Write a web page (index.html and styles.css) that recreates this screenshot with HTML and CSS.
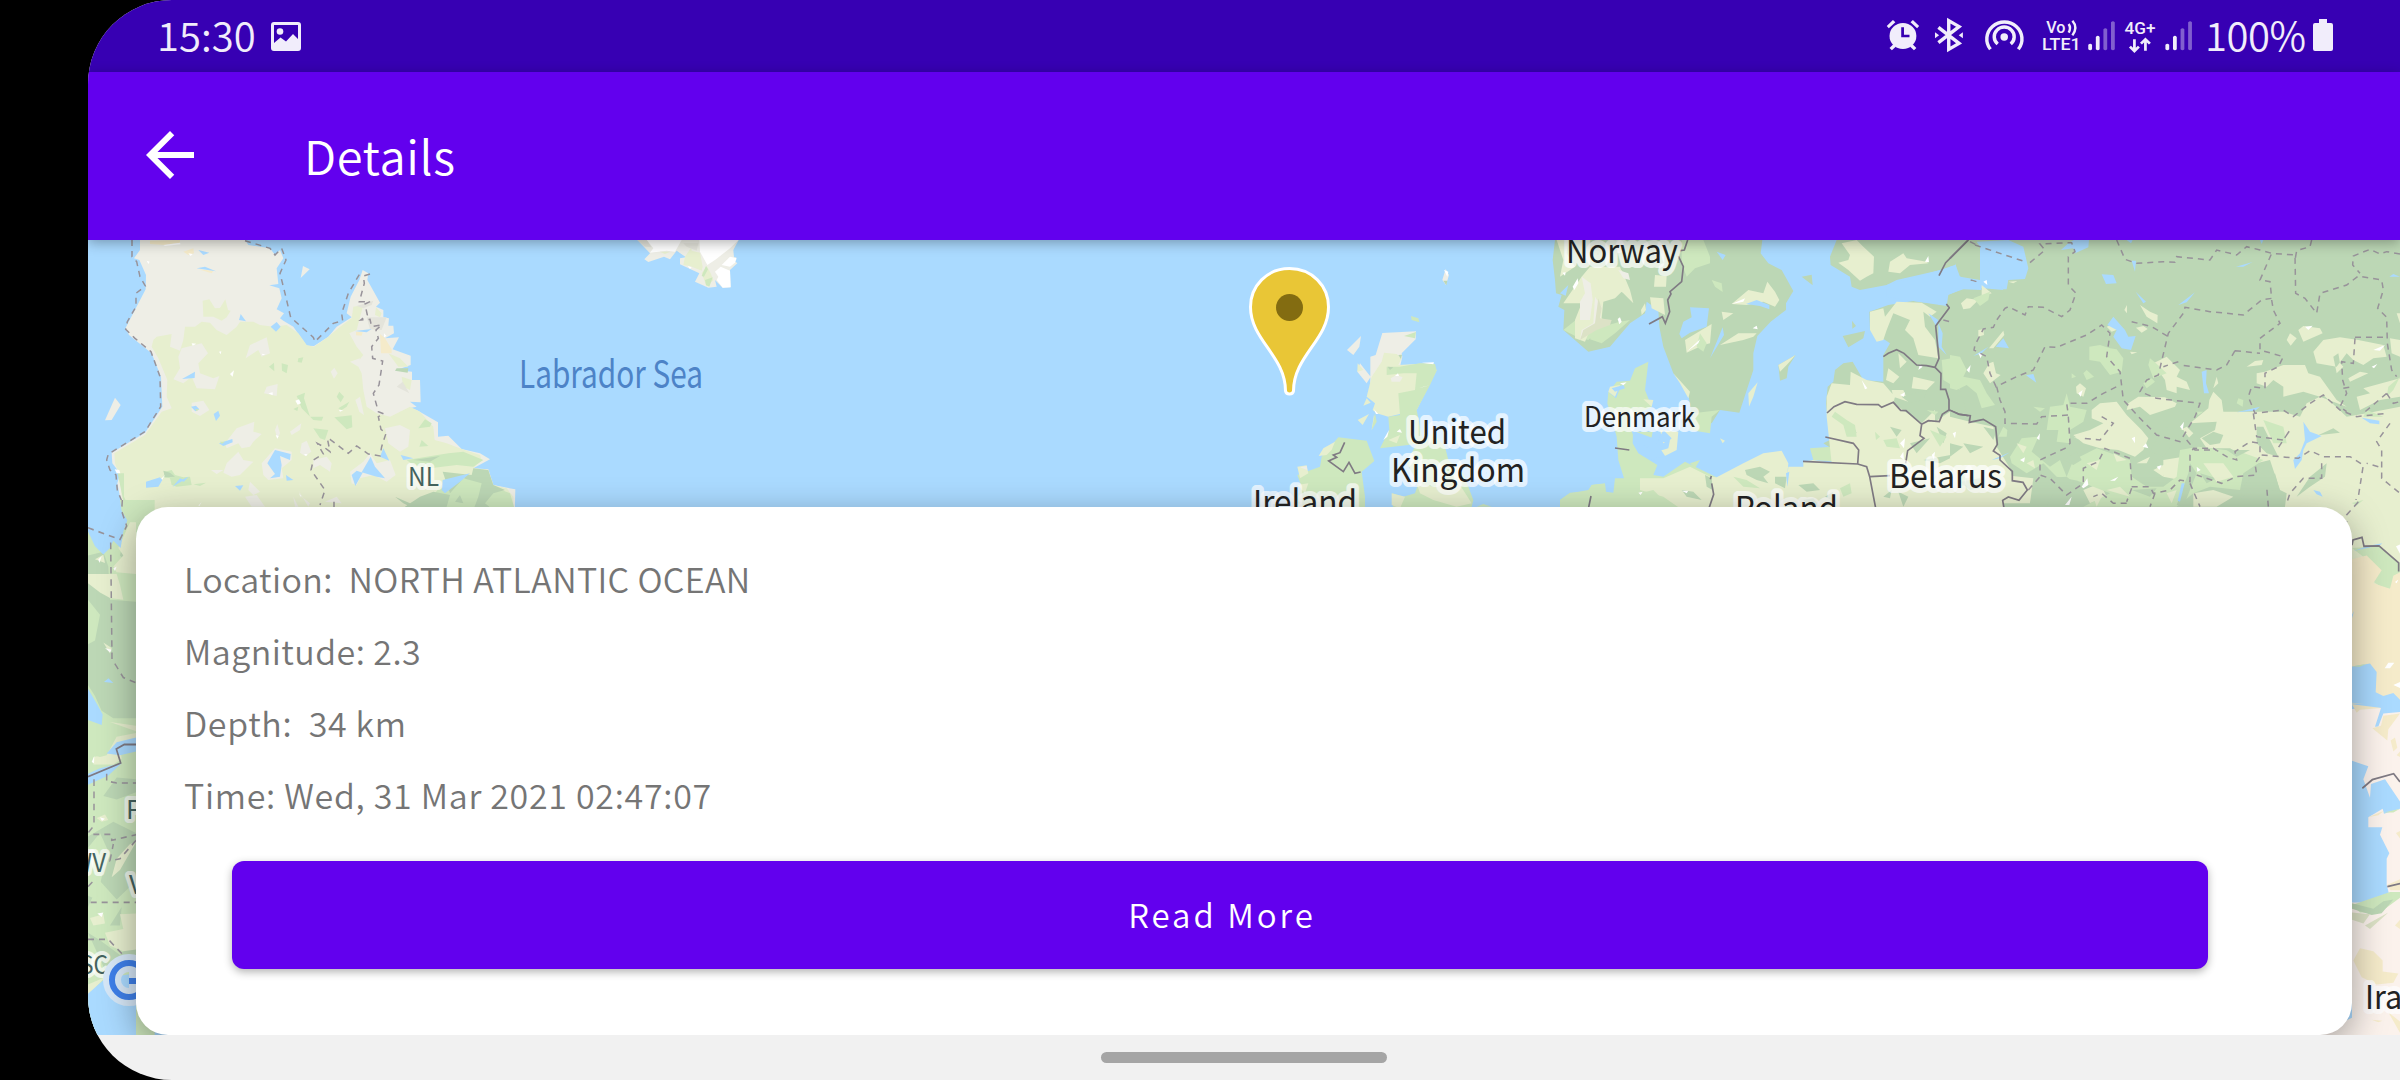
FILE: index.html
```html
<!DOCTYPE html>
<html lang="en">
<head>
<meta charset="utf-8">
<title>Details</title>
<link rel="stylesheet" href="styles.css">
</head>
<body>
<main class="screen">
  <header class="status">
    <span class="clock">15:30</span>
    <svg class="picture" viewBox="0 0 30 29"><path fill-rule="evenodd" d="M3 0H27Q30 0 30 3V26Q30 29 27 29H3Q0 29 0 26V3Q0 0 3 0ZM3 3V21L9.500 15.500 15 19.500 22 12 27 17V3Z"/><circle cx="9" cy="9.500" r="3.300"/></svg>
    <svg class="signals" viewBox="70 0 900 216" preserveAspectRatio="none">
      <g class="ink">
        <circle cx="125" cy="108" r="39"/>
        <path d="M78 78L96 60L103 67L84 85ZM172 78L154 60L147 67L166 85ZM86 144L97 133L104 140L93 151ZM164 144L153 133L146 140L157 151Z"/>
        <path class="cut" d="M124 82V108H144" fill="none"/>
        <path class="line" d="M228 82L288 130L258 148V62L288 80L228 128"/>
        <path d="M218 97L230 106L218 115ZM299 97L287 106L299 115Z"/>
        <circle cx="419" cy="111" r="11"/>
        <path class="line" d="M400 132A29 29 0 1 1 438 132M379 148A51 51 0 1 1 460 148"/>
        <path class="wave" d="M606 72Q614 84 606 98M617 62Q634 82 617 106"/>
        <path d="M663 134Q669 128 674 134V148Q669 154 663 148ZM685 111Q691 104 696 111V148Q691 154 685 148Z"/>
        <path class="dim" d="M707 88Q713 81 718 88V148Q713 154 707 148ZM729 67Q735 60 740 67V148Q735 154 729 148Z"/>
        <path d="M887 134Q893 128 898 134V148Q893 154 887 148ZM909 111Q915 104 920 111V148Q915 154 909 148Z"/>
        <path class="dim" d="M931 88Q937 81 942 88V148Q937 154 931 148ZM953 67Q959 60 964 67V148Q959 154 953 148Z"/>
        <path class="updown" d="M797 118V153M784 140L797 153L810 140M829 152V119M816 131L829 118L842 131"/>
      </g>
      <text class="net" x="541" y="98" textLength="56" lengthAdjust="spacingAndGlyphs">Vo</text>
      <text class="net" x="529" y="151" textLength="112" lengthAdjust="spacingAndGlyphs">LTE1</text>
      <text class="net" x="768" y="101" textLength="90" lengthAdjust="spacingAndGlyphs">4G+</text>
    </svg>
    <span class="charge">100%</span>
    <svg class="battery" viewBox="0 0 20 32"><path d="M6 0H14V4H18Q20 4 20 6V30Q20 32 18 32H2Q0 32 0 30V6Q0 4 2 4H6Z"/></svg>
  </header>

  <div class="toolbar">
    <svg class="back" viewBox="0 0 24 24"><path d="M20 11H7.830l5.590-5.590L12 4l-8 8 8 8 1.410-1.410L7.830 13H20v-2z"/></svg>
    <h1>Details</h1>
  </div>

  <section class="map">
    <svg class="tiles" viewBox="88 240 2312 795">
      <rect class="sea" x="88" y="240" width="2312" height="795"/>

      <!-- Quebec and Labrador -->
      <g transform="translate(80 230) scale(.33333)">
        <path class="bare" d="M180 30V60L162 85 178 90 198 135 197 178 137 293 147 315 215 370 243 440 247 530 195 608 95 668 97 700 120 730 112 760 122 810 130 840 145 900H1303L1306 778 1240 765 1225 718 1180 715 1230 688 1200 670 1145 657 1105 617 1074 620V577L1010 540 988 535 1010 530 990 515 1022 517 1020 450H996V425L950 420 992 405V377L938 358 957 322 915 325 942 310 940 287H925L927 265 910 262V240L888 230 900 218 862 150 865 130 848 120 838 150 812 200 800 250 815 262 770 290 745 320 702 348 680 347 640 290 610 272 600 265 612 250 590 238 605 205 598 175 568 166 595 162 590 115 610 85 600 60 585 75 570 55 505 45 495 30ZM669 108L689 118 662 144ZM105 503L122 525 95 570 75 571ZM24 820L30 825V848H24Z"/>
        <path class="grass" d="M230 320L275 312 270 350 300 362 310 330 315 290 345 290 365 275 390 278 410 300 440 315 470 290 480 275 520 275 540 285 580 290 620 285 655 310 680 345 702 350 745 320 780 290 815 265 820 230 850 225 830 300 808 310 830 350 850 375 830 400 845 430 850 480 860 530 890 550 930 560 960 545 990 530 1020 545 1060 590 1064 630 1100 640 1145 657 1200 675 1205 690 1180 715 1225 720 1240 765 1280 775 1300 800V900H145L125 800 120 740 105 700 103 670 195 615 245 545 275 535 260 500 262 450 235 385 215 350 220 330ZM368 212L388 208 405 235 420 234 436 208 444 240 452 242 440 262 425 272 400 260 370 260ZM888 232L905 250 900 262 885 255ZM925 370L960 385 985 410 955 410ZM965 440L995 450 990 480 970 470Z"/>
        <path class="bare" d="M305 355L365 340 384 370 355 400 360 430 400 445 418 438 405 478 350 475 335 440 310 460 280 448 300 415 295 380ZM510 345L560 322 570 370 545 380 535 360 497 385ZM560 470L593 462 590 498 552 490ZM335 518L370 512 388 540 360 558 335 545ZM752 425L763 413 773 430 762 446ZM826 510L840 500 852 555 838 545ZM915 595L960 585 990 600 985 650 960 665 925 640ZM435 640L470 595 523 575 520 605 545 612 520 635 510 650 485 655 475 640 440 655ZM585 600L592 582 600 610 592 627ZM630 605L664 580 660 600 635 615ZM665 640L680 632 694 665 675 678 660 668ZM440 700L475 665 490 690 520 695 480 735 455 740 430 728ZM393 720L430 720 410 732ZM545 700L585 655 635 665V690L605 715 610 745 565 750 550 735ZM700 690L740 680 755 700 750 725 720 705 700 715ZM810 725L850 695 870 670 890 700 930 690 947 735 920 755 880 735 840 745 830 765 815 760ZM510 755L540 785 520 795 505 780ZM495 800L530 795 555 830H515ZM655 780L665 800 690 820 685 830ZM735 815L770 800 785 820ZM810 395L840 385 835 410ZM640 800L655 830H645Z"/>
        <path class="mid" d="M567 410L582 398 583 424ZM605 400L624 405 620 430 606 422ZM655 385L670 382 665 398 653 396ZM650 498L675 488 672 505 690 560 730 560 725 572 700 570 665 535ZM778 485L792 500 782 517 770 500ZM775 535L808 515 800 530 785 540ZM763 562L815 556 817 592 800 598ZM700 595L745 600 735 630 720 625ZM1015 595L1035 568 1055 580 1050 590ZM1018 650L1025 630 1045 648ZM980 690L1105 670 1150 665 1210 690 1180 710 1130 705 1050 715 1000 705ZM990 820L1060 795 1090 760 1180 740 1240 770 1290 790 1302 830V900H990ZM255 725L275 720 285 735 310 742 330 740 335 765 290 770 275 765 270 745 250 742ZM113 730L132 730V800L150 840 180 860 165 900H148ZM340 763L378 758 360 768Z"/>
        <path class="forest" d="M950 415L985 415 983 428 945 422ZM1000 690L1080 678 1050 695ZM1088 725L1175 735 1180 715 1225 720 1240 765 1275 780 1240 790 1215 820 1240 840H1180L1195 800 1205 760 1150 745 1110 790ZM975 830L1020 800 1060 785 1110 795 1100 830 1075 860H970ZM1125 815L1140 795 1150 820ZM250 722L270 728 285 740 255 742ZM945 800L990 820 1000 835 970 820ZM120 830L145 850 150 880Z"/>
        <path class="sand" d="M210 32L300 30V38L255 45 210 42ZM310 65L340 55 342 70 325 75ZM355 118L400 122 395 130ZM828 305L848 307 845 317 828 316ZM900 312L915 325 935 358V370L903 370Z"/>
        <path class="rock" d="M830 228L880 212 875 225 850 235ZM860 262L920 262 905 300 870 298ZM950 470L968 455 988 490Z"/>
        <path class="snow" d="M250 45L300 38 302 43 255 48ZM325 70L338 72 332 78ZM200 92L209 95 205 102ZM335 340L349 341 338 347ZM450 432L462 421 458 440ZM646 512L657 508 663 520 653 524ZM545 371L557 373 548 376ZM417 365L424 364 422 373ZM565 490L578 487V496ZM777 540L790 541 780 545ZM240 750L255 735 243 755ZM104 718L118 720 121 730 110 730ZM355 828L365 815 358 828ZM658 788L664 800 660 798ZM912 310L920 318 912 322ZM587 615L596 618 592 626ZM672 672L683 673 678 679Z"/>
        <path class="sea" d="M355 60L388 68 370 75ZM350 115L375 110 408 124ZM477 270L482 252 498 274ZM572 290L590 276 602 290 588 305ZM306 447L345 425 344 444ZM333 530L348 527 358 538 346 544ZM401 552L415 542 420 557 408 573ZM417 640L457 627 458 637 430 648ZM562 700L585 660 632 672 630 690 600 678 605 705 600 740 570 745 585 732ZM618 735L640 750 620 752ZM198 755L240 742 247 750 235 770 198 773ZM278 770L300 745 312 750ZM300 752L325 740 312 755ZM465 768L490 766 480 782ZM815 735L830 722 848 728 826 768ZM845 727L872 680 885 710 915 745 890 740ZM900 680L910 655 928 692ZM962 675L1000 685 970 690ZM1088 750L1170 730 1140 755 1095 790 1085 780ZM825 303L875 297 860 307Z"/>
        <path class="mid" d="M640 537L655 530 652 543ZM420 635L435 635 425 642ZM345 538L358 537 350 544Z"/>
        <path class="dash" d="M156 30V80L170 95 180 140 196 168 168 190V230L142 275 137 298 165 325 213 365 240 440 242 530 195 605 85 672 80 690 90 720 108 735 112 780 126 815 130 850 145 870M495 32L570 55 585 75 605 55 618 90 600 130 615 190 632 262 700 322 705 335 760 280 788 272 785 250 805 190 840 130M870 132L850 138 853 160 838 215 870 215 855 222 862 255 842 270 870 268 875 290 905 285 888 300 895 325 875 350 878 385 908 393 897 465 880 490 895 545 912 552 895 560 903 598 918 610 905 650 900 678 865 672 830 648 805 670 750 628 742 625 750 665 730 650 712 640 730 672 700 690 693 720 735 780 720 825M762 815V835"/>
      </g>

      <!-- Greenland tip -->
      <g transform="translate(500 230) scale(.33333)">
        <path class="bare" d="M412 30L450 70 433 88 445 96 492 80 510 88 530 62 558 82 540 85V103L598 130 585 155 625 173 650 170 645 150 668 173 692 172 690 120 712 100 700 90 710 82H702L700 60 716 30Z"/>
        <path class="snow" d="M440 30L460 55 450 68 500 62 525 65 545 30ZM598 30L600 65 622 105 645 90 690 55 716 30ZM665 105L690 80 710 85 705 98 690 110ZM645 125L662 110 690 122 692 172 668 173 650 150 655 140Z"/>
        <path class="grass" d="M480 65L510 65 495 72ZM555 80L572 55 572 40 575 62 600 68 608 110 605 122 570 108 550 105ZM605 130L620 108 632 130 640 150 620 170Z"/>
        <path class="mid" d="M605 138L618 108 624 118 612 140ZM615 150L638 142 628 170 618 165Z"/>
        <path class="rock" d="M412 30H440L455 52 435 50ZM550 40H595L590 62 560 50Z"/>
        <path class="snow" d="M563 108L575 112 570 117Z"/>
      </g>

      <!-- British Isles -->
      <g transform="translate(1200 230) scale(.33333)">
        <path class="bare" d="M737 117L747 135 738 165 727 150ZM441 360L483 318 478 350 460 375ZM480 400L512 440 500 460 472 425ZM547 309L648 304 647 328 605 370 607 380 600 410 700 398 511 480V380L527 375Z"/>
        <path class="grass" d="M552 368L590 372 605 385 595 405 690 400 710 420 650 540 565 560 530 550 518 540 525 520 500 500 515 440 545 395ZM473 400L490 420 472 425ZM500 505L512 518 490 527ZM473 570L507 552 488 585ZM515 600L522 555 528 570Z"/>
        <path class="mid" d="M633 258L655 265 658 277 635 270ZM612 318L648 306 645 325ZM598 410L660 400 705 402 710 422 690 465 650 540 670 640 540 655 568 600 565 560 600 555 595 490 645 480 650 430 610 430 560 435 560 410ZM415 622L500 632 523 693 485 725 495 800 495 850H270L305 770 292 735 360 710 365 680ZM650 640L700 610 735 650 745 690 790 730 805 770 820 810 810 850H580L577 790 610 800 645 790 655 760 620 700ZM515 600L525 550 530 575ZM830 830L850 822 875 830ZM1080 850V810L1110 788 1165 785 1175 765 1200 762V850Z"/>
        <path class="grass" d="M356 678L370 655 405 635 395 660 380 675ZM292 710L320 706 325 730 300 745ZM292 765L325 760 315 790ZM565 630L600 615 590 640ZM575 790L615 800 600 835 575 825ZM650 760L700 770 780 765 815 820 770 830 700 810 660 790Z"/>
        <path class="bare" d="M572 445L590 435 608 442 600 455 575 455ZM300 712L320 708 322 720Z"/>
        <path class="snow" d="M665 398L702 397 700 403ZM585 438L594 430 597 438ZM522 538L535 552 528 552ZM550 630L567 600 562 620ZM590 605L600 597 606 608ZM655 475L690 466 670 470ZM732 120L745 125 742 140Z"/>
        <path class="forest" d="M595 375L606 374 603 387ZM563 410L580 412 570 420ZM730 152L742 152 739 166Z"/>
        <path class="border" d="M434 637L420 668 400 675 410 682 386 693 430 725 447 697 465 730 482 726M1172 798L1167 840"/>
      </g>

      <!-- Scandinavia and the Baltic -->
      <g transform="translate(1530 230) scale(.33333)">
        <path class="forest" d="M75 30L68 90 75 150 78 190 95 195 85 230 103 240 100 300 175 365 240 350 300 280 345 250 350 215 385 240 388 290 400 350 430 430 475 490 485 560 545 580 570 540 628 548 670 420V370L682 318 722 275 768 240V220L790 183 755 120 715 100 692 70 697 30ZM815 140L845 134 848 166ZM920 30L900 80 902 105 960 140 965 170 990 180 1070 165 1100 150 1275 110 1275 100 1290 140 1350 150V870H1240L880 640 900 630 888 520 893 470 910 455 915 420 940 400 968 395 1000 450 1060 455V375L1080 340 1020 300 1018 245 1075 225 1150 213 1250 228 1255 195 1300 175 1350 170V30ZM938 318L1005 303 1000 325 955 352ZM966 272L978 288 967 296ZM745 405L797 375 775 410 770 445 750 452Z"/>
        <path class="sea" d="M1070 165L1230 120 1275 105 1280 140 1350 152V172L1300 175 1250 195 1245 225 1150 213 1070 200Z"/>
        <path class="mid" d="M355 395L345 480 365 530 310 560 308 640 325 670 382 705 370 735 400 740 465 695 515 720 560 742 545 870H90V810L120 790 175 780 185 765 225 760 228 785 250 788 255 745 282 745 265 690 260 620 232 520 235 485 258 505 270 475 245 475 260 455 300 452 315 415ZM305 605H368L360 645 330 635ZM480 600L490 550 570 540 545 560 540 610ZM100 300L175 240 195 310 175 330 140 320ZM840 655L905 650 900 600 985 640V700L850 690ZM190 300L235 285 270 275 300 270 255 310 215 340 180 328ZM455 30H520L540 80V100L495 115 470 140 455 100ZM545 150L575 160 578 186 555 170Z"/>
        <path class="grass" d="M390 600L445 605 440 660 400 680 380 665 415 655 420 630 400 640ZM560 742L640 700 700 670 755 662 775 700 770 760 775 710 820 710 820 695 850 690 905 700 890 560 890 500 905 460 960 465 962 425 1010 450 1060 460 1095 500 1090 520 1175 580 1215 540 1215 575 1260 545 1290 610 1350 610V870H500L400 800 330 780 330 745 400 745 480 710 540 740ZM400 605H440L430 620ZM655 490L683 457 670 500 657 530ZM745 405L797 375 770 405 750 425ZM80 30H115L110 70 135 110 90 140 100 90ZM100 220L155 140 180 110 270 110 290 170 255 205 220 215 215 265 235 280 180 300 165 335 135 325 135 270 155 220ZM255 130L275 120 300 180 310 220 280 190 250 165ZM375 135L410 138 408 170 372 170ZM360 202L400 205 405 255 365 235ZM333 240L345 220 348 240 335 255ZM605 222L655 180 700 190 712 155 735 185 748 210 735 230 700 215 650 225ZM575 245L610 250 580 270ZM570 345L625 310 680 310 670 320 640 330ZM465 330L545 282 540 340 520 345 470 368ZM430 430L480 485 475 505 450 460ZM925 98L955 90 960 75 935 40 980 30 1000 50 1032 80 1030 130 1010 140 990 152 955 120ZM1075 125L1080 95 1120 70 1130 85 1190 95 1195 100 1140 105 1110 130ZM1020 245L1060 235 1065 260 1100 215 1175 218 1220 245 1200 260 1180 245 1185 290 1215 330 1225 385 1165 375 1150 325 1125 300 1140 270 1090 250 1070 300 1060 330 1040 335 1020 300ZM1105 370L1130 395 1110 415ZM1075 415L1108 440 1090 460 1068 450ZM1150 440L1215 455 1190 480 1145 475ZM1085 480L1120 480 1135 515 1090 500ZM1290 215L1350 205 1335 240 1300 235ZM235 485L240 470 270 465 255 500ZM570 625L585 632 578 640ZM340 508L370 510 365 530Z"/>
        <path class="bare" d="M155 140L182 160 188 210 180 270 150 270 150 215 165 190ZM195 200L215 230 210 280 150 330 155 300 190 280ZM265 120L295 130 300 150 280 145Z"/>
        <path class="dune" d="M205 205L215 235 210 265 245 270 240 285 200 300 150 330 160 300 195 280Z"/>
        <path class="forest" d="M645 720L690 710 720 725 700 740 715 760 680 750 650 735ZM735 740L770 740 765 775 735 760ZM525 735L545 745 548 780 530 770ZM455 780L490 785 515 810 470 800ZM805 765L850 760 870 780 830 785ZM1115 500L1190 480 1180 510 1140 520ZM950 590L970 585 980 610 960 600ZM1080 590L1115 600 1100 620ZM1140 640L1200 625 1160 670ZM1220 590L1250 610 1240 640ZM1060 800L1085 780 1080 805ZM1105 785L1135 800 1120 830ZM885 800L910 785 905 810ZM1180 690L1290 670 1230 700ZM1260 545L1350 570 1350 620 1290 600ZM820 810L850 805 870 830H840ZM1300 655L1350 640V690L1310 700Z"/>
        <path class="mid" d="M915 545L950 570 975 585 980 620 950 620 940 585 905 560ZM1235 390L1290 380 1350 400V470L1290 480 1240 450ZM1035 605L1050 620 1038 630ZM930 775L960 760 965 790 940 800ZM1060 630L1100 625 1110 655 1070 650ZM330 790L370 780 390 800 350 815ZM1190 540L1225 545 1215 555ZM510 310L530 340 520 365 500 350ZM480 700L510 690 495 715ZM1200 600L1250 620 1230 650ZM610 740L650 750 690 775 640 770Z"/>
        <path class="sea" d="M560 65L587 75 578 90ZM480 232L537 235 530 290 480 308 455 325 448 312 460 275 485 262ZM578 292L582 315 540 385ZM648 222L680 210 718 225V238L690 228ZM245 475L280 465 285 475 255 485ZM303 600L320 640 355 650 330 670 370 690 380 680 410 685 370 625ZM1225 280L1238 310 1235 350 1250 375 1225 350ZM1195 250L1225 270 1220 290ZM768 730L778 725 772 770ZM90 190L115 165 107 197ZM400 600L425 625 410 640 385 630Z"/>
        <path class="snow" d="M128 170L143 145 145 160 133 180ZM97 128L107 127 105 137ZM263 267L270 262 275 275 268 283ZM605 222L645 205 640 215ZM668 295L680 287 683 298ZM470 365L510 328 505 340ZM270 460L290 457 280 466ZM1185 95L1195 78 1197 97ZM1170 403L1178 410 1165 420ZM1110 495L1125 487 1122 500ZM995 450L1012 475 1005 478ZM1110 640L1125 625 1122 655ZM1110 680L1120 665 1122 690ZM1290 645L1302 640V657ZM1205 675L1215 665 1212 690ZM325 788L338 785 332 795ZM455 782L475 782 470 790ZM1190 728L1205 735 1200 742Z"/>
        <path class="border" d="M473 30L463 60 450 62M445 78L460 110 455 155 420 185 423 192 413 210 419 245 406 280 397 260 357 282M1315 30L1247 98 1227 137M1249 222L1258 233 1217 288 1227 385 1215 412 1233 430 1232 478H1247L1257 510V540L1285 552 1320 558 1318 577 1350 568M1060 380L1075 370 1100 359 1122 370 1160 405 1190 407 1215 412M891 549L912 530 945 515 980 523 1045 524 1055 532 1090 517 1112 541 1128 542 1175 583 1195 572 1228 575 1237 553 1257 540M1175 583L1170 617 1182 625 1133 662 1127 700M886 621L970 640 986 660 983 702M819 694L983 702 1010 710 1019 740 1040 850M1019 740L1080 737M544 738L541 748M545 760L551 793 538 832M183 798L176 832M255 654L298 660"/>
        <path class="dash" d="M1240 270L1295 285 1325 315M1340 320L1332 360M1322 150L1350 158M1320 35L1350 50"/>
      </g>

      <!-- Western Russia -->
      <g transform="translate(1950 230) scale(.33333)">
        <path class="forest" d="M70 30H1350V870H0V540L60 575 0 390V195L60 170 100 175 160 180 100 60Z"/>
        <path class="grass" d="M0 560L60 575 130 590 140 650 180 715 190 755 230 780 200 810 160 810V870H0ZM110 730L250 745 240 820H160ZM1350 530L1250 550 1190 560 1120 495 1070 520 1050 560 1000 545 920 545 820 545 815 510 790 485 778 510 775 535 720 580 800 575 795 600 750 625 770 655 840 655 920 700 960 690 990 780 1010 790 1000 870H1350ZM920 430L945 425 1000 405 1065 405 1075 430 1110 440 1160 510 1190 530 1110 500 1060 485 1000 500 1000 470 970 450 950 470 920 460ZM890 410L915 393 940 390 935 405ZM1090 365L1120 330 1170 322 1225 330 1300 345 1310 380 1270 385 1240 405 1210 390 1190 370 1160 410 1100 400ZM1170 400L1165 370 1150 380 1160 430 1180 410ZM1045 300L1060 288 1110 295 1118 310 1060 335ZM1010 330L1020 310 1040 325 1022 347ZM1340 250H1350V280ZM1320 325L1350 330V380L1325 370ZM1195 445L1230 425 1255 430 1200 455ZM1240 475L1350 445V500L1290 510 1230 540 1220 500 1260 490ZM33 220L50 205 85 210 60 235 40 238ZM95 165L125 190 95 200ZM175 155L202 153 190 160ZM570 225L600 245 623 255 622 280 590 260ZM523 240L531 225V250ZM558 293L580 288 593 297 575 308ZM117 355L160 302 163 315 130 355ZM470 290L490 283 505 298 485 305ZM85 300L100 298 102 315 85 320ZM100 430L118 400 130 395 138 430 152 435 120 460ZM565 500L645 502 680 520 675 530 600 555 570 530 530 540 535 520ZM610 400L650 380 690 420 680 440 710 455 720 480 680 470 680 490 650 480 645 450ZM378 470L390 460 408 475 400 500 380 490ZM450 520L500 515 530 555 575 600 595 625 580 660 555 680 505 660 450 655 400 640 370 615 420 600 460 580 425 565 425 540ZM755 625L790 605 820 615 810 640 780 645ZM790 475L800 440 805 460ZM540 365L562 367 545 373ZM690 600L710 590 730 610 710 630ZM370 620L440 640 400 635ZM640 690L700 680 730 720 690 750 640 740ZM400 780L450 760 470 800 420 820ZM780 690L870 700 870 750 820 760 780 740Z"/>
        <path class="mid" d="M70 205L120 185 115 210 90 228ZM418 350L450 345 480 355 500 358 520 385 515 425 480 435 450 395 418 390ZM0 375L30 380 50 420 40 440 90 450 110 490 135 525 95 535 80 490 50 465 20 480 0 475ZM300 530L340 525 350 490 360 530 410 540 400 575 360 600V640L320 635 325 600 290 600ZM595 405L600 385 618 400 650 430 610 445ZM580 460L605 445 615 455 590 475ZM400 430L410 420 432 440 410 450ZM860 520L865 505 880 510 878 530ZM145 620L160 590 172 600 170 620ZM180 680L215 625 265 620 245 665 300 710 330 690 350 740 430 720 400 755 320 740 280 700 230 730 185 700ZM370 690L440 655 540 690 545 740 590 770 640 770 680 740 690 660 745 650 870 665 940 690 880 730 870 780 780 770 730 790 680 830H400L480 790 430 770 350 740ZM690 680L740 650 720 710ZM740 545L760 545 745 555ZM365 430L378 440 365 445ZM940 570L1000 590 1010 640 970 640ZM1250 540L1300 560 1240 560ZM1350 440L1330 480 1310 500 1315 470ZM0 715L40 735 60 760 30 770ZM250 530L285 535 270 545Z"/>
        <path class="forest" d="M640 590L700 600 730 640 670 640 640 680 600 665ZM920 590L940 590 985 680 950 670 920 640ZM880 770L920 720 950 740 910 770 870 810ZM1040 800L1080 740 1130 700 1125 740 1080 770ZM965 740L975 730 990 785 960 780ZM1085 625L1150 595 1170 608 1110 615ZM680 825L715 730 720 700 740 730 700 830ZM280 745L350 740 400 780 350 795ZM545 780L620 775 600 800ZM30 755L90 745 110 770 60 780ZM250 790L310 790 290 830 240 820ZM830 660L900 660 860 680ZM100 590L140 600 130 630ZM0 640L40 650 0 680ZM40 640L100 650 60 670ZM750 730L800 745 770 760ZM340 690L380 665 395 690 370 705Z"/>
        <path class="grass" d="M410 700L450 690 440 720ZM610 720L650 700 640 740ZM560 700L600 680 590 700ZM760 700L820 700 850 740 800 755ZM470 780L510 770 540 800ZM200 640L230 650 220 670ZM230 700L250 690 255 715ZM730 790L790 780 850 800 800 830H730ZM650 790L680 780 665 820ZM430 800L460 790 440 830ZM490 670L530 690 500 695Z"/>
        <path class="sea" d="M80 35L175 30 220 50 235 115 225 147 175 150 170 178 158 178 140 145 100 65ZM0 110L18 105 20 135 60 152 90 160 95 180 40 178 0 192ZM333 60L355 40 372 30H417L415 52 375 70 370 55ZM455 133L490 135 500 160 468 162ZM545 92L558 92 555 125ZM557 185L588 215 580 220ZM685 225L735 187 710 217ZM858 110L908 96 880 110ZM472 285L490 260 525 300 535 320 557 318 543 360 515 355 490 320 500 300ZM70 378L115 350 95 370ZM137 350L160 325 177 355ZM228 436L250 432 259 458ZM755 425L770 420 768 460 777 490 762 490ZM860 547L930 530 915 542ZM1235 563L1288 572V583L1260 580ZM1060 575L1080 605 1115 618 1070 640 1060 660 1055 690 1035 717 1030 690 1050 670 1065 630ZM695 760H704L690 815 683 812ZM1090 780L1110 785 1118 800 1100 793ZM1318 140L1330 132 1350 140ZM125 690L180 667 150 685ZM530 30H548L543 40ZM930 30H940L935 42Z"/>
        <path class="snow" d="M100 155L110 150 112 165ZM50 420L62 405 58 428ZM85 370L97 372 92 385ZM385 490L398 480 392 500ZM1065 290L1088 287 1075 300ZM1265 410L1282 402 1272 415ZM620 710L635 705 628 720ZM395 770L412 745 415 765 400 775ZM545 625L555 620V640ZM690 590L702 575 698 600ZM8 610L18 605 15 625ZM210 690L225 682 222 697ZM345 825L365 800 358 825ZM480 752L505 740 495 752ZM740 710L752 720 742 725ZM578 650L588 640 595 655ZM260 625L270 610 268 630ZM1270 360L1305 345 1290 362Z"/>
        <path class="border" d="M55 30L0 85M0 541L28 553 61 557 58 577 100 568 137 590 142 643 130 663 150 676V690L187 724V752L219 757 232 780 207 811 175 801 158 811 162 835"/>
        <path class="dash" d="M75 45L225 95M240 98L285 60 270 42 365 38 375 65 355 80V165L378 190 360 240 335 260 280 232 235 230 225 255 175 230 165 235 140 270 130 292 100 297 75 345 72 360 110 380 120 430 138 470 200 440 250 420 285 350 320 352 410 315 455 285 480 310 470 380 510 425 520 510 570 565 620 615 690 635 735 560 750 520 620 505 570 485 590 450 625 435 650 330 655 310 700 250 705 232 780 245 880 255 935 210 965 205 960 155 930 150 965 70M500 30L525 88 560 100 640 95 675 97 680 80 780 90 800 60 860 75 890 50 930 60 965 70 1035 75 1037 190 1065 205 1100 250 1110 190 1190 165 1225 138 1295 150 1300 180 1283 235 1310 262 1312 340 1325 420 1340 440M1085 30L1080 50 1040 62 1035 90M1350 72L1310 65 1290 72 1260 58 1210 78 1208 105 1230 130M965 210L970 240 990 280 930 325V360L1000 380 985 410 945 430V475L905 470 895 500 915 550 1000 540 1030 560 1080 520 1120 495 1170 540 1220 560 1310 550M1215 322H1312M1215 325L1210 400 1175 395 1178 450 1190 490 1170 530 1190 545M140 470L150 510 165 545V580L260 582 275 560 355 555 350 520 410 520 460 490 510 465M355 560L360 640 345 655 270 690V735L300 745 350 795 400 760V715L445 695 465 655 540 685 545 760M545 770H600L610 790 660 780 690 750 720 755V675L730 655 790 655 830 680 860 690 855 665 900 635 930 640V680L915 700 920 735 860 740 815 760 740 735M855 362L930 370M855 362L830 405 800 420 690 405M685 395L640 410M615 790L600 830M530 820H490L455 790 430 800M545 775L530 815M935 675L1045 685 1080 662 1120 680 1200 680 1240 705 1225 800 1190 850M910 550L920 620 1000 630 1020 600 980 660M1115 700L1115 745 1060 745 1020 790 1010 820M1320 580L1280 635 1295 660V745L1350 790M1310 490L1330 520 1350 515M455 560L490 580 450 630 400 625M710 630L735 660 800 660M955 830L950 770M235 780L270 740M720 760L750 830M545 275L605 290 655 320M1310 490L1240 550M1180 475L1210 470M1285 710L1250 700"/>
      </g>

      <!-- Eastern North America -->
      <g transform="translate(80 500) scale(.33333 .3699)">
        <rect class="mid" x="24" y="0" width="200" height="1450"/>
        <path class="forest" d="M24 150L70 140 85 180 90 270 168 275V590L100 590 65 570 45 530 24 500ZM70 800L110 750 168 755V790L110 810ZM100 870L168 900V1030L110 1080 60 1030 24 1100V910ZM130 110L168 130 150 180 120 150ZM24 1170L60 1190 120 1230 168 1180V1250L80 1280ZM90 1150L125 1100 120 1150Z"/>
        <path class="grass" d="M24 200L110 200 120 230 130 270 90 265 60 250 24 225ZM100 180L130 150 115 130 150 60 168 60V200L110 195ZM70 385L95 400 90 415ZM40 690L60 695 80 690 110 640 168 630V655L120 660 125 700 100 715 40 715ZM90 600L168 610V625ZM95 1020L110 970 150 930 168 925 120 1000ZM120 1120L168 1118V1215L130 1220 90 1205 75 1170 130 1160ZM45 160L70 148 75 170ZM24 1310L75 1290 24 1340ZM50 860L75 850 85 865 65 870ZM30 1130L70 1120 75 1145 40 1150Z"/>
        <path class="mid" d="M24 270L60 310 45 380 24 390ZM24 620L60 610 90 640 60 690 24 700ZM60 900L90 960 70 1000 50 1080 24 1070V940Z"/>
        <path class="sea" d="M24 0H120L125 30 142 55 130 85 122 130 100 110 90 130 70 147 45 125 24 85ZM24 510L50 550 68 580 65 608 24 595ZM72 492L85 482 100 495ZM24 740L60 725 125 712 85 745 24 770ZM80 685L110 655 168 642V680L120 690ZM24 1335L80 1290 168 1280V1450H24Z"/>
        <path class="snow" d="M35 708L43 692 42 712ZM55 160L65 152 58 170ZM100 185L110 180 105 192ZM52 1118L70 1115 65 1127ZM75 400L95 405 90 412ZM60 858L75 862 66 868Z"/>
        <path class="dash" d="M24 75L120 107 140 70 125 30 127 0M92 115L96 430 130 480 168 494M42 755V880L24 900M80 740V760L110 765H168M40 904H95V920L168 905M168 920L120 970 90 975 100 930M32 1088H168M24 1188H85L145 1245M24 1045L40 1030"/>
        <path class="border" d="M24 748L122 711 109 673 133 661H168"/>
      </g>

      <!-- Caspian region -->
      <g transform="translate(2180 500) scale(.33333 .3699)">
        <path class="grass" d="M420 0H660V250H420Z"/>
        <path class="mid" d="M516 130L600 125 660 170V240L610 240 580 220 595 190 560 160ZM515 8L550 0 530 15Z"/>
        <path class="sand" d="M516 160L560 150 605 190 580 225 630 240 640 205 660 195V550H516Z"/>
        <path class="coast" d="M516 565L600 560 660 545V1450H400L516 1400Z"/>
        <path class="sea" d="M516 450L570 442 590 465 587 520 610 530 640 522 660 540V573L610 577 595 612 585 613 603 562 565 560 560 552 516 548ZM516 705L565 720 550 755 570 805 573 768 615 755 660 815V835L612 848 608 835 565 858V885H607L600 905 628 955 620 970V1040L630 1075 540 1088H516ZM516 320L522 300 516 310ZM520 138L570 123 607 117 600 122Z"/>
        <path class="sand" d="M577 617L603 610 610 583 660 577 625 620 622 650ZM632 650L645 642 652 670 640 680ZM516 552L605 562 540 567 530 575ZM565 858L612 840 595 852ZM622 1040L660 1025V1055L632 1055ZM520 1245L540 1212 580 1220 608 1245V1275L655 1280 640 1305 590 1310 545 1290ZM625 1385L660 1410V1440ZM575 1405L608 1408 595 1412ZM645 1150L660 1135V1160ZM650 690L660 680V695ZM648 900L660 895V915Z"/>
        <path class="mid" d="M516 1095L630 1060 660 1060V1075L600 1115 540 1115ZM516 450L560 443 540 451ZM612 845L660 835 640 845Z"/>
        <path class="forest" d="M516 1090L580 1105 610 1085 640 1080 605 1117 575 1122 516 1105Z"/>
        <path class="dune" d="M516 1115L570 1120 550 1145 516 1135ZM555 1150L625 1115 570 1160Z"/>
        <path class="snow" d="M614 455L625 440 643 440 630 455ZM640 500L660 492V508ZM645 222L655 215 650 225ZM648 125L660 120V145Z"/>
        <path class="border" d="M516 122L519 108 546 101 552 125 597 124 656 170V193M547 779L577 756 641 740 660 762M622 1045L660 1037"/>
        <path class="dash" d="M535 5L500 40V60"/>
      </g>

      <g class="labels">
        <text class="water" x="519" y="388" textLength="184" lengthAdjust="spacingAndGlyphs">Labrador Sea</text>
        <text class="country" x="1566" y="262.500" textLength="112" lengthAdjust="spacingAndGlyphs">Norway</text>
        <text class="country" x="1408" y="444" textLength="98" lengthAdjust="spacingAndGlyphs">United</text>
        <text class="country" x="1391" y="481.500" textLength="134" lengthAdjust="spacingAndGlyphs">Kingdom</text>
        <text class="country" x="1253" y="514" textLength="104" lengthAdjust="spacingAndGlyphs">Ireland</text>
        <text class="country small" x="1584" y="427" textLength="111" lengthAdjust="spacingAndGlyphs">Denmark</text>
        <text class="country" x="1735" y="520" textLength="103" lengthAdjust="spacingAndGlyphs">Poland</text>
        <text class="country" x="1889" y="488" textLength="113" lengthAdjust="spacingAndGlyphs">Belarus</text>
        <text class="country" x="2365" y="1009" textLength="56" lengthAdjust="spacingAndGlyphs">Iran</text>
        <text class="state" x="408" y="486" textLength="31" lengthAdjust="spacingAndGlyphs">NL</text>
        <text class="state" x="126" y="819">PA</text>
        <text class="state" x="71" y="872" textLength="35" lengthAdjust="spacingAndGlyphs">WV</text>
        <text class="state" x="129" y="894">VA</text>
        <text class="state" x="80" y="974" textLength="28" lengthAdjust="spacingAndGlyphs">SC</text>
      </g>
      <g class="brand">
        <circle class="halo" cx="129" cy="980" r="17"/>
        <path class="halo" d="M129 981H160"/>
        <circle cx="129" cy="980" r="17"/>
        <path d="M129 981H160"/>
      </g>
      <path class="pin" d="M1289.500 268.500C1267 268.500 1250.500 286 1250.500 307C1250.500 340 1285.500 356 1285.500 391Q1286 394 1289.500 394Q1293 394 1293.500 391C1293.500 356 1328.500 340 1328.500 307C1328.500 286 1312 268.500 1289.500 268.500Z"/>
      <circle class="pin-eye" cx="1289.500" cy="307.500" r="13.500"/>
    </svg>

    <article class="card">
      <p class="location">Location:&nbsp; NORTH ATLANTIC OCEAN</p>
      <p class="magnitude">Magnitude: 2.3</p>
      <p class="depth">Depth:&nbsp; 34 km</p>
      <p class="time">Time: Wed, 31 Mar 2021 02:47:07</p>
      <button class="more">Read More</button>
    </article>
  </section>

  <footer class="nav"><span class="handle"></span></footer>
</main>
</body>
</html>
```
FILE: styles.css
```css
* { box-sizing: border-box; }
body { margin: 0; width: 2400px; height: 1080px; overflow: hidden; background: #000; padding-left: 88px; font-family: "Noto Sans CJK JP", "Noto Sans", sans-serif; }
.screen { height: 1080px; display: flex; flex-direction: column; overflow: hidden; border-radius: 84px 0 0 84px; background: #f1f1f1; }

.status { flex: none; height: 72px; display: flex; align-items: center; background: #3700b3; color: #f1edfb; padding: 0 67px 0 69px; fill: #f1edfb; font-size: 40px; line-height: 68px; font-weight: 350; }
.clock { width: 114px; height: 72px; white-space: nowrap; }
.picture { width: 30px; height: 29px; }
.signals { width: 310px; height: 72px; margin-left: auto; margin-right: 11px; }
.charge { width: 108px; height: 72px; white-space: nowrap; letter-spacing: -.5px; }
.battery { width: 20px; height: 32px; margin-top: -2px; }
.cut { stroke: #3700b3; stroke-width: 8; }
.line { fill: none; stroke: #f1edfb; stroke-width: 10; }
.wave { fill: none; stroke: #f1edfb; stroke-width: 7; }
.updown { fill: none; stroke: #f1edfb; stroke-width: 8; }
.dim { opacity: .4; }
.net { font: 500 52px Roboto, sans-serif; }

.toolbar { flex: none; height: 168px; display: flex; align-items: center; padding-left: 46px; background: #6200ee; color: #fff; position: relative; z-index: 1; box-shadow: 0 3px 12px rgba(0, 0, 0, .3); }
.back { width: 72px; height: 72px; margin-top: -2px; fill: #fff; }
.toolbar h1 { margin: -3px 0 0 98px; font-size: 47px; line-height: 70px; font-weight: 350; letter-spacing: .6px; }

.map { flex: none; height: 795px; position: relative; overflow: hidden; padding: 267px 48px 0; }
.tiles { position: absolute; left: 0; top: 0; width: 2312px; height: 795px; }
.sea { fill: #aadaff; }
.bare { fill: #eeeee6; }
.grass { fill: #e7efcf; }
.mid { fill: #cee8be; }
.forest { fill: #bcd7b5; }
.sand { fill: #f5ebca; }
.coast { fill: #fbf2ec; }
.rock { fill: #e4e4db; }
.dune { fill: #dce2c6; }
.snow { fill: #fff; }
.border { fill: none; stroke: #7f7a83; stroke-width: 5; }
.dash { fill: none; stroke: #98939a; stroke-width: 4.5; stroke-dasharray: 18 15; }
.labels text { paint-order: stroke; stroke-linejoin: round; }
.water { font-size: 38px; fill: #4d83c7; }
.country { font-size: 33px; fill: #222; stroke: rgba(255, 255, 255, .7); stroke-width: 10px; }
.country.small { font-size: 28px; }
.state { font-size: 26px; fill: #45635f; stroke: rgba(255, 255, 255, .7); stroke-width: 8px; }
.brand { fill: none; stroke: #3f80ea; stroke-width: 6; }
.halo { stroke: #d7e8f8; stroke-width: 18; }
.pin { fill: #e9c636; stroke: #fff; stroke-width: 3; }
.pin-eye { fill: #836c11; }

.card { position: relative; height: 528px; border-radius: 32px; background: #fff; padding: 36px 48px 0; color: #757575; box-shadow: 0 10px 36px rgba(0, 0, 0, .36); display: flex; flex-direction: column; }
.card p { margin: 0; font-size: 34px; line-height: 72px; height: 72px; font-weight: 350; white-space: pre; }
.location { letter-spacing: .35px; }
.magnitude { letter-spacing: .45px; }
.depth { letter-spacing: .65px; }
.time { letter-spacing: .7px; }
.more { margin: 30px 96px 0 48px; height: 108px; border: 0; border-radius: 12px; background: #6200ee; color: #fff; font: 350 33px/106px "Noto Sans CJK JP", sans-serif; letter-spacing: 3px; padding: 0 0 2px 4px; box-shadow: 0 3px 8px rgba(0, 0, 0, .3); }

.nav { flex: 1; padding: 17px 0 0 1013px; }
.handle { display: block; width: 286px; height: 11px; border-radius: 6px; background: #a5a5a5; }
```
